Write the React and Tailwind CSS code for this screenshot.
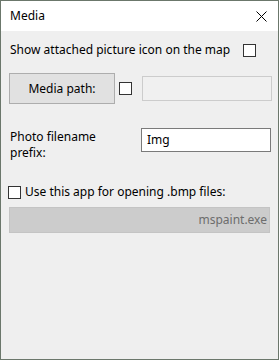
export default function App() {
  return (
    <div className="w-[279px] h-[360px] border border-[#6b776b] bg-[#efefef] flex flex-col text-[12px] leading-[16px] text-black" style={{ fontFamily: '"Noto Sans", "Liberation Sans", Arial, sans-serif' }}>
      {/* title bar */}
      <div className="h-[30px] bg-white flex items-center justify-between pl-[9px] pr-[10px] shrink-0">
        <span className="text-[12px]">Media</span>
        <svg width="11" height="11" viewBox="0 0 11 11" className="mr-[1px]">
          <path d="M0.5 0.5 L10.5 10.5 M10.5 0.5 L0.5 10.5" stroke="#000" strokeWidth="1" />
        </svg>
      </div>

      {/* show icon row */}
      <div className="flex items-center mt-[12px] pl-[9px] h-[14px]">
        <span className="w-[233px] whitespace-nowrap">Show attached picture icon on the map</span>
        <span className="w-[13px] h-[13px] border border-[#333] bg-white" />
      </div>

      {/* media path row */}
      <div className="flex items-center mt-[16px] pl-[8px] h-[31px]">
        <button className="w-[106px] h-[31px] bg-[#e1e1e1] border border-[#adadad] text-[12px]">Media path:</button>
        <span className="w-[13px] h-[13px] border border-[#333] bg-white ml-[4px]" />
        <div className="w-[130px] h-[25px] border border-[#cccccc] bg-[#f0f0f0] ml-[10px]" />
      </div>

      {/* prefix row */}
      <div className="flex mt-[24px] pl-[9px]">
        <span className="w-[131px] leading-[16px] pt-[1px]">Photo filename<br />prefix:</span>
        <div className="w-[130px] h-[24px] border border-[#7a7a7a] bg-white flex items-center pl-[5px]">Img</div>
      </div>

      {/* bmp row */}
      <div className="flex items-center mt-[24px] pl-[7px] h-[14px]">
        <span className="w-[13px] h-[13px] border border-[#333] bg-white" />
        <span className="ml-[4px] whitespace-nowrap">Use this app for opening .bmp files:</span>
      </div>

      <div className="ml-[8px] mt-[8px] w-[261px] h-[26px] bg-[#cccccc] border border-[#c4c4c4] flex items-center justify-end pr-[2px] text-[#6d6d6d]">
        mspaint.exe
      </div>
    </div>
  )
}
